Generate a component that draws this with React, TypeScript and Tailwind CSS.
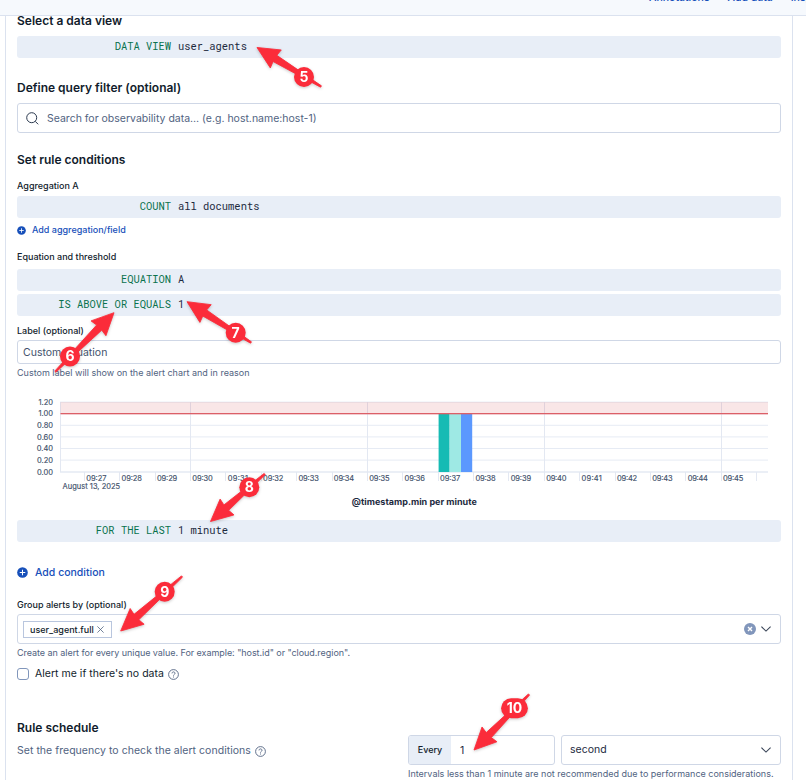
import React from "react";

const INK = "text-[#111c2c]";

function Heading({ children, className = "" }: { children: React.ReactNode; className?: string }) {
  return (
    <h2 className={`text-[12px] font-semibold whitespace-nowrap text-[#111c2c] ${className}`}>{children}</h2>
  );
}

function Label({ children, className = "" }: { children: React.ReactNode; className?: string }) {
  return (
    <div className={`text-[9px] font-medium whitespace-nowrap text-[#111c2c] ${className}`}>{children}</div>
  );
}

function Help({ children, className = "" }: { children: React.ReactNode; className?: string }) {
  return <div className={`text-[9px] whitespace-nowrap text-[#516381] ${className}`}>{children}</div>;
}

function Expression({ name, value, className = "" }: { name: string; value: string; className?: string }) {
  return (
    <div
      className={`flex h-[22px] items-start gap-[7px] rounded-[3px] bg-[#e8eef7] font-['Roboto_Mono','DejaVu_Sans_Mono',monospace] text-[10.45px] leading-[20px] whitespace-pre ${className}`}
    >
      <span className="w-[154px] text-right text-[#09724d]">{name}</span>
      <span className="text-[#1d2a3e]">{value}</span>
    </div>
  );
}

function PlusCircle({ size }: { size: number }) {
  return (
    <svg width={size} height={size} viewBox="0 0 12 12" className="shrink-0">
      <circle cx="6" cy="6" r="5.8" fill="#1750ba" />
      <path d="M6 3v6M3 6h6" stroke="#fff" strokeWidth="1.1" />
    </svg>
  );
}

function Question() {
  return (
    <svg width="11" height="11" viewBox="0 0 11 11" fill="none" stroke="#516381" strokeWidth="0.9" className="shrink-0">
      <circle cx="5.5" cy="5.5" r="4.9" />
      <path d="M4 4.4c0-2 3-2 3 0 0 1-1.5 1-1.5 2.2" />
      <path d="M5.5 7.5v1" />
    </svg>
  );
}

function Chevron() {
  return (
    <svg width="10" height="6" viewBox="0 0 10 6" fill="none" stroke="#3b4659" strokeWidth="1.1" className="shrink-0">
      <path d="M0.4 0.6 5 5.1 9.6 0.6" />
    </svg>
  );
}

const minutes = Array.from({ length: 19 }, (_, i) => 27 + i);
const levels = ["1.20", "1.00", "0.80", "0.60", "0.40", "0.20", "0.00"];

function Chart() {
  return (
    <svg width="764" height="130" viewBox="17 385 764 130" className="block shrink-0 font-['Inter',sans-serif]">
      {levels.map((t, i) => (
        <g key={t}>
          <rect x="60" y={401.6 + i * 11.6} width="708" height={i === 6 ? 1.6 : 1} fill="#e6ebf4" />
          <text x="53" y={404.8 + i * 11.63} fontSize="7.5" textAnchor="end" fill="#42516b" stroke="#42516b" strokeWidth="0.15">
            {t}
          </text>
        </g>
      ))}
      {[60, 190, 367, 544, 721].map((x) => (
        <rect key={x} x={x} y="402" width="1" height="70" fill="#e3e8f2" />
      ))}
      {Array.from({ length: 20 }, (_, i) => (
        <rect key={i} x={Math.floor(84.4 + i * 35.38)} y="472" width="1" height="9" fill="#e3e8f2" />
      ))}
      {minutes.map((m, i) => (
        <text key={m} x={86.2 + i * 35.38} y="480.8" fontSize="7.5" textLength="20.3" fill="#42516b" stroke="#42516b" strokeWidth="0.15">
          {`09:${m}`}
        </text>
      ))}
      <text x="62.6" y="488.5" fontSize="7.5" textLength="57.5" fill="#42516b" stroke="#42516b" strokeWidth="0.15">
        August 13, 2025
      </text>
      <rect x="438.6" y="414" width="11" height="58" fill="#16bbb4" />
      <rect x="449.6" y="414" width="11.4" height="58" fill="#9ee9e4" />
      <rect x="461" y="414" width="11.2" height="58" fill="#5b98fe" />
      <rect x="60.5" y="402" width="707.5" height="12" fill="#c61e25" fillOpacity="0.11" />
      <rect x="60.5" y="413" width="707.5" height="1.3" fill="#dc5f67" />
      <text x="414.3" y="505" fontSize="9" fontWeight="700" textAnchor="middle" textLength="125" fill="#1d2a3e">
        @timestamp.min per minute
      </text>
    </svg>
  );
}

type Pointer = { n: string; tip: [number, number]; tail: [number, number]; at: [number, number] };

const pointers: Pointer[] = [
  { n: "5", tip: [257, 47.5], tail: [321, 86.5], at: [304, 77] },
  { n: "6", tip: [114, 312.7], tail: [55.3, 371.7], at: [70, 356.5] },
  { n: "7", tip: [187, 301.7], tail: [251, 342.5], at: [235.7, 332.7] },
  { n: "8", tip: [210.5, 521.5], tail: [264.7, 474], at: [249.3, 487.3] },
  { n: "9", tip: [120.7, 631], tail: [182, 576.5], at: [164.7, 591.7] },
  { n: "10", tip: [474, 750], tail: [529, 694.5], at: [514.5, 708.3] },
];

function Arrow({ n, tip, tail, at }: Pointer) {
  const dx = tail[0] - tip[0];
  const dy = tail[1] - tip[1];
  const len = Math.hypot(dx, dy);
  const angle = (Math.atan2(dy, dx) * 180) / Math.PI;
  const half = n.length > 1 ? 13.4 : 10;
  return (
    <g style={{ filter: "drop-shadow(0 1px 1.5px rgba(0,0,0,0.22))" }}>
      <path
        transform={`translate(${tip[0]} ${tip[1]}) rotate(${angle})`}
        d={`M0 0 L22 -10.5 L21 -3.6 L${len} -0.8 L${len} 0.8 L21 3.6 L22 10.5 Z`}
        fill="#fb2c3a"
        stroke="#fb2c3a"
        strokeWidth="0.8"
        strokeLinejoin="round"
      />
      <rect x={at[0] - half} y={at[1] - 10} width={half * 2} height="20" rx="10" fill="#fb2c3a" />
      <text x={at[0]} y={at[1] + 4.9} fontSize="14" fontWeight="700" textAnchor="middle" fill="#fff">
        {n}
      </text>
    </g>
  );
}

export default function App() {
  return (
    <div className="relative flex h-[780px] w-[806px] flex-col overflow-hidden bg-white font-['Inter',sans-serif]">
      <header className="h-[16px] shrink-0 overflow-hidden border-b border-[#dbe2ef] bg-[#f6f9fd]">
        <div className="-mt-[9.5px] flex h-[14px] gap-[18px] pl-[649px] text-[10.5px] leading-[14px] font-medium whitespace-nowrap text-[#1750ba]">
          <span>Annotations</span>
          <span>Add data</span>
          <span>Inspect</span>
        </div>
      </header>

      <main className="ml-[5px] flex w-[788px] grow flex-col border-x border-[#dbe2ef] pr-[11px] pl-[11px]">
        <Heading className="h-[20px] leading-[9px]">Select a data view</Heading>
        <Expression name="DATA VIEW" value="user_agents" />

        <Heading className="mt-[20px] h-[25px] leading-[20px]">Define query filter (optional)</Heading>
        <div className="flex h-[30px] items-center rounded-[3px] border border-[#cfd7e6] pl-[8px]">
          <svg width="13" height="13" viewBox="0 0 13 13" fill="none" stroke="#2b394f" strokeWidth="1">
            <circle cx="5.7" cy="5.7" r="5" />
            <path d="m9.2 9.3 3 3" />
          </svg>
          <span className="ml-[8px] pt-[2px] text-[10.5px] whitespace-nowrap text-[#516381]">
            Search for observability data… (e.g. host.name:host-1)
          </span>
        </div>

        <Heading className="mt-[17px] h-[20px] leading-[20px]">Set rule conditions</Heading>
        <Label className="mt-[10px] h-[16px] leading-[12px]">Aggregation A</Label>
        <Expression name="COUNT" value="all documents" />
        <div className="mt-[5px] flex h-[14px] items-center gap-[6px] text-[9px] font-medium text-[#1750ba]">
          <PlusCircle size={9} />
          <span>Add aggregation/field</span>
        </div>

        <Label className="mt-[14px] h-[18px] leading-[12px]">Equation and threshold</Label>
        <Expression name="EQUATION" value="A" />
        <Expression name="IS ABOVE OR EQUALS" value="1" className="mt-[3px]" />

        <Label className="mt-[9px] h-[15px] leading-[12px]">Label (optional)</Label>
        <div className="flex h-[24px] items-center rounded-[3px] border border-[#cfd7e6] pt-[2px] pl-[5px] text-[10.5px] text-[#42516b]">
          Custom equation
        </div>
        <Help className="h-[21px] leading-[18px]">Custom label will show on the alert chart and in reason</Help>

        <Chart />
        <Expression name="FOR THE LAST" value="1 minute" className="mt-[5px]" />

        <div className="mt-[22px] flex h-[16px] items-center gap-[7px] text-[10.5px] font-medium text-[#1750ba]">
          <PlusCircle size={11} />
          <span className="pt-[2px]">Add condition</span>
        </div>

        <Label className="mt-[19px] h-[15px] leading-[12px] tracking-[0.01px]">Group alerts by (optional)</Label>
        <div className="flex h-[30px] items-center rounded-[3px] border border-[#cfd7e6] pr-[9px] pl-[5px]">
          <span className={`flex h-[17px] items-center gap-[3px] border border-[#b9c6de] pr-[7px] pl-[6px] text-[9px] font-medium ${INK}`}>
            <span className="pt-px">user_agent.full</span>
            <svg width="7" height="7" viewBox="0 0 7 7" stroke="#516381" strokeWidth="0.8">
              <path d="M.4.4 6.6 6.6M6.6.4.4 6.6" />
            </svg>
          </span>
          <svg width="12" height="12" viewBox="0 0 12 12" className="ml-auto">
            <circle cx="6" cy="6" r="6" fill="#8196bb" />
            <path d="m4 4 4 4M8 4 4 8" stroke="#fff" strokeWidth="1.4" />
          </svg>
          <span className="ml-[5px]">
            <Chevron />
          </span>
        </div>
        <Help className="h-[22px] leading-[18px] tracking-[-0.045px]">
          Create an alert for every unique value. For example: "host.id" or "cloud.region".
        </Help>

        <div className={`flex h-[16px] items-center text-[10.5px] ${INK}`}>
          <span className="h-[12px] w-[12px] rounded-[3px] border border-[#8196bb]" />
          <span className="ml-[6px] tracking-[0.02px]">Alert me if there's no data</span>
          <span className="ml-[4px]">
            <Question />
          </span>
        </div>

        <div className="mt-[36px] flex">
          <section className="w-[391px]">
            <Heading className="h-[20px] leading-[20px]">Rule schedule</Heading>
            <div className="mt-[5px] flex h-[16px] items-center gap-[4px] text-[10.5px] tracking-[0.035px] whitespace-nowrap text-[#516381]">
              Set the frequency to check the alert conditions
              <Question />
            </div>
          </section>
          <section className="w-[373px] pt-[17px]">
            <div className="flex gap-[6px]">
              <div className="flex h-[30px] w-[147px] overflow-hidden rounded-[3px] border border-[#cfd7e6]">
                <span className={`flex w-[42px] items-center justify-center bg-[#e8eef7] text-[9px] font-medium ${INK}`}>Every</span>
                <span className="flex items-center pt-px pl-[9px] text-[10.5px] text-[#1d2a3e]">1</span>
              </div>
              <div className="flex h-[30px] w-[220px] items-center justify-between rounded-[3px] border border-[#cfd7e6] pr-[9px] pl-[8px] text-[10.5px] text-[#1d2a3e]">
                second
                <Chevron />
              </div>
            </div>
            <Help className="leading-[18px]">
              Intervals less than 1 minute are not recommended due to performance considerations.
            </Help>
          </section>
        </div>
      </main>

      <svg width="806" height="780" viewBox="0 0 806 780" className="pointer-events-none absolute inset-0">
        {pointers.map((p) => (
          <Arrow key={p.n} {...p} />
        ))}
      </svg>
    </div>
  );
}
